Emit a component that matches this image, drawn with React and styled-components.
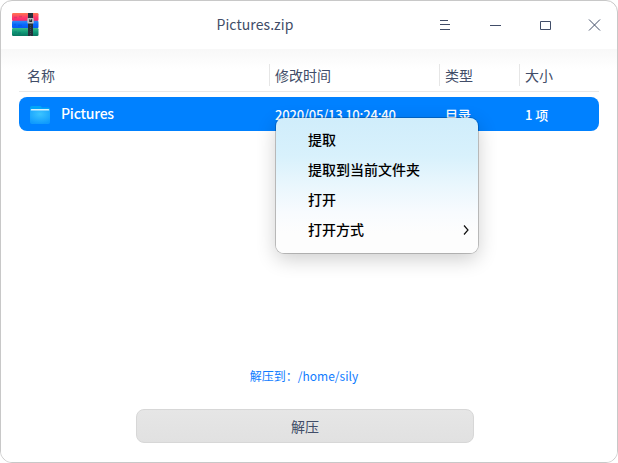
import React from "react";
import styled, { createGlobalStyle } from "styled-components";

const Global = createGlobalStyle`
  html, body { margin: 0; background: #fff; }
  * { box-sizing: border-box; }
  body { font-family: "Noto Sans CJK SC", sans-serif; font-size: 14px; color: #414d68; overflow: hidden; }
`;

const Window = styled.main`
  position: relative;
  width: 618px;
  height: 463px;
  border: 1px solid #c8c8c8;
  border-radius: 12px;
  background: #fff;
  display: flex;
  flex-direction: column;
  overflow: hidden;
`;

const TitleBar = styled.header`
  height: 48px;
  flex: none;
  display: grid;
  grid-template-columns: 78px 1fr 197px;
  align-items: center;
  padding-left: 11px;
  svg { display: block; }
`;

const Title = styled.h1`
  margin: 0;
  padding-bottom: 2px;
  text-align: center;
  font-size: 14px;
  line-height: 20px;
  font-weight: 400;
  letter-spacing: 0.08px;
`;

const Controls = styled.div`
  display: flex;
  height: 48px;
`;

const ControlButton = styled.button`
  width: 50px;
  flex: none;
  height: 48px;
  padding: 0;
  border: 0;
  background: none;
  color: #414d68;
`;

const Content = styled.section`
  flex: 1;
  display: flex;
  flex-direction: column;
  padding: 14px 18px 0;
  background: linear-gradient(#f8f8f8, #fff 20px);
`;

const HeaderRow = styled.div`
  display: grid;
  grid-template-columns: 250px 170px 80px 80px;
  height: 29px;
  border-bottom: 1px solid #e8e8e8;
`;

const HeaderCell = styled.div`
  height: 22px;
  margin-top: 1px;
  line-height: 23px;
  padding-left: ${(p) => (p.$first ? 8 : 5)}px;
  border-left: ${(p) => (p.$first ? "0" : "1px solid #e6e6e6")};
`;

const FileRow = styled.div`
  display: grid;
  grid-template-columns: 250px 170px 80px 80px;
  align-items: center;
  height: 34px;
  margin-top: 5px;
  border-radius: 8px;
  background: #0081ff;
  color: #fff;
  font-weight: 500;
`;

const FileCell = styled.div`
  display: flex;
  align-items: center;
  gap: 10px;
  height: 34px;
  line-height: 34px;
  padding-top: ${(p) => (p.$first ? 0 : 1)}px;
  padding-left: ${(p) => (p.$first ? 10 : 6)}px;
  font-size: ${(p) => (p.$first ? 14 : 13)}px;
  letter-spacing: ${(p) => p.$tracking || 0}px;
  white-space: nowrap;
`;

const FileName = styled.span`
  height: 34px;
  line-height: 33px;
`;

const Footer = styled.footer`
  margin-top: auto;
  display: flex;
  flex-direction: column;
  align-items: center;
  padding: 0 8px 19px 0;
`;

const PathLink = styled.a`
  font-size: 12px;
  line-height: 18px;
  color: #0f7cff;
  margin: 0 2px 24px 0;
`;

const ExtractButton = styled.button`
  width: 338px;
  height: 34px;
  padding: 0;
  border: 1px solid #d7d7d7;
  border-radius: 8px;
  background: linear-gradient(#e6e6e6, #e1e1e1);
  font: inherit;
  line-height: 32px;
  color: #414d68;
`;

const Menu = styled.nav`
  position: absolute;
  left: 275px;
  top: 117px;
  width: 202px;
  height: 135px;
  padding-top: 6px;
  border-radius: 8px;
  background: linear-gradient(#d0edfb, #d8f1fc 28%, #e8f6fd 48%, #f8fbfe 70%, #fdfdfd 85%);
  box-shadow: 0 0 0 1px rgba(0, 0, 0, 0.2), 0 6px 20px rgba(0, 0, 0, 0.2);
  color: #000;
  font-weight: 500;
`;

const MenuItem = styled.div`
  display: flex;
  justify-content: space-between;
  height: 30px;
  line-height: 30px;
  padding: 0 9px 0 32px;
  svg { margin-top: 11px; }
`;

function ArchiveIcon() {
  return (
    <svg width="28" height="25" viewBox="0 0 28 25">
      <defs>
        <linearGradient id="red" x2="0" y2="1"><stop stopColor="#ff7650" /><stop offset=".55" stopColor="#ff3b6b" /><stop offset="1" stopColor="#f52670" /></linearGradient>
        <linearGradient id="blue" x2="0" y2="1"><stop stopColor="#338bf5" /><stop offset=".5" stopColor="#0869ff" /><stop offset="1" stopColor="#0759f4" /></linearGradient>
        <linearGradient id="green" x2="0" y2="1"><stop stopColor="#3dbb8c" /><stop offset=".5" stopColor="#109a77" /><stop offset="1" stopColor="#08755f" /></linearGradient>
      </defs>
      <rect x="0" y="0" width="26.5" height="8" rx="1.3" fill="url(#red)" />
      <rect x="0" y="7.8" width="26.5" height="7.5" rx="1.3" fill="url(#blue)" />
      <rect x="0" y="15" width="26.5" height="8" rx="1.3" fill="url(#green)" />
      <path d="M2 4.5h3m2-1h3M2 11.5h2m2 1h4M2 19h3m1 1h3" stroke="#172c62" strokeOpacity=".15" strokeWidth="1.4" />
      <rect x="16" y="0" width="5" height="23" fill="#25303b" />
      <path d="M18.5 12v11" stroke="#48515a" strokeWidth=".8" strokeDasharray="1 1" />
      <rect x="15.3" y="5" width="6.5" height="5.5" rx=".8" fill="#b9bdc1" />
      <path d="M17.3 6.3V9h2.8V6.3h-1v1.3h-.8V6.3z" fill="#24282d" />
    </svg>
  );
}

function FolderIcon() {
  return (
    <svg width="22" height="20" viewBox="0 0 22 20">
      <defs>
        <radialGradient id="folder" cx=".5" cy=".25" r=".75"><stop stopColor="#3bc4ff" /><stop offset="1" stopColor="#109bfd" /></radialGradient>
      </defs>
      <path d="M1 4Q1 2 3 2h8q1.3 0 1.8 1.4h6.4Q21 3.4 21 5.4V9H1z" fill="#00a5f8" />
      <rect x="1.7" y="4.9" width="18.6" height="4" rx="1" fill="#d2f0ff" />
      <path d="M1 6.6h20V18q0 2-2 2H3q-2 0-2-2z" fill="url(#folder)" />
    </svg>
  );
}

const controls = [
  { name: "菜单", path: "M20 19.5h8M20 23.5h10M20 28.5h10" },
  { name: "最小化", path: "M20 24.5h11" },
  { name: "最大化", path: "M20.5 20.5h10v8h-10z" },
  { name: "关闭", path: "M19 18.5l11 11M30 18.5l-11 11" },
];

const columns = ["名称", "修改时间", "类型", "大小"];
const actions = ["提取", "提取到当前文件夹", "打开", "打开方式"];

export default function App() {
  return (
    <>
      <Global />
      <Window>
        <TitleBar>
          <ArchiveIcon />
          <Title>Pictures.zip</Title>
          <Controls>
            {controls.map((c) => (
              <ControlButton key={c.name} aria-label={c.name}>
                <svg width="50" height="48" fill="none" stroke="currentColor"><path d={c.path} /></svg>
              </ControlButton>
            ))}
          </Controls>
        </TitleBar>
        <Content>
          <HeaderRow>
            {columns.map((c, i) => <HeaderCell key={c} $first={i === 0}>{c}</HeaderCell>)}
          </HeaderRow>
          <FileRow>
            <FileCell $first $tracking={-0.22}><FolderIcon /><FileName>Pictures</FileName></FileCell>
            <FileCell $tracking={-0.2}>2020/05/13 10:24:40</FileCell>
            <FileCell>目录</FileCell>
            <FileCell>1 项</FileCell>
          </FileRow>
          <Footer>
            <PathLink>解压到：/home/sily</PathLink>
            <ExtractButton>解压</ExtractButton>
          </Footer>
        </Content>
        <Menu>
          {actions.map((a, i) => (
            <MenuItem key={a}>
              {a}
              {i === 3 && <svg width="6" height="10" fill="none" stroke="#111" strokeWidth="1.2"><path d="M1 .5l4 4.5-4 4.5" /></svg>}
            </MenuItem>
          ))}
        </Menu>
      </Window>
    </>
  );
}
